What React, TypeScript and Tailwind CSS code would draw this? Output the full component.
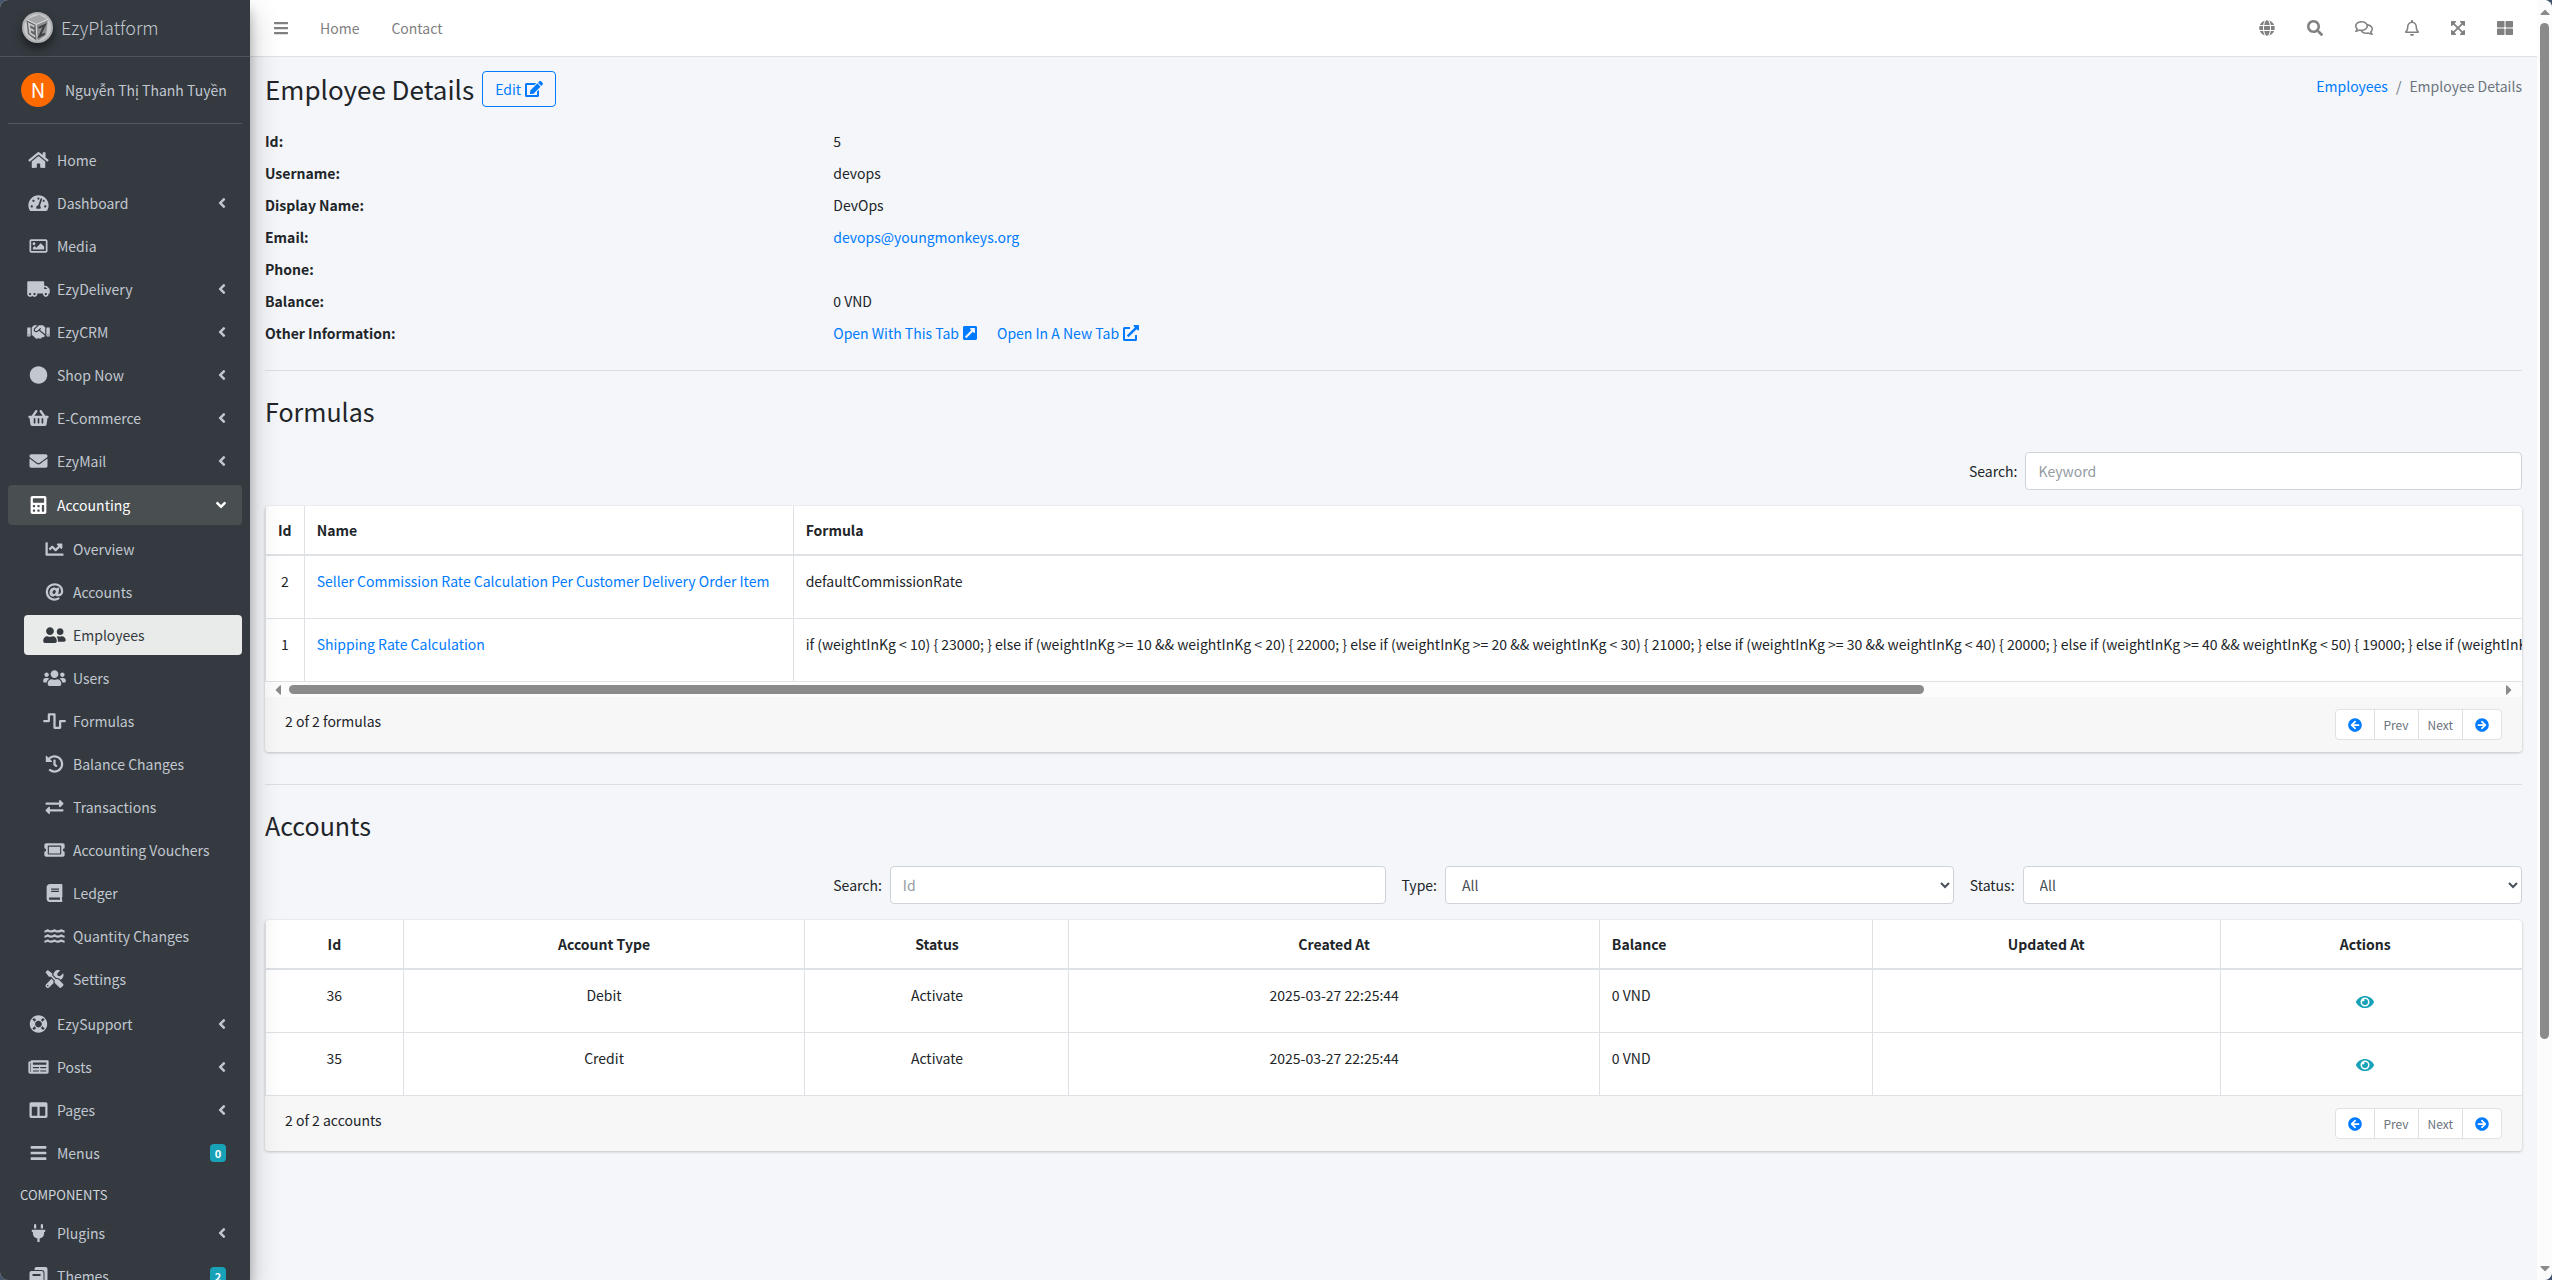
import type { ReactNode } from 'react';
import type { IconType } from 'react-icons';
import {
  FaAngleDown,
  FaAngleLeft,
  FaArrowCircleLeft,
  FaArrowCircleRight,
  FaAt,
  FaBars,
  FaBook,
  FaCalculator,
  FaCaretDown,
  FaCaretLeft,
  FaCaretRight,
  FaCaretUp,
  FaChartLine,
  FaCircle,
  FaColumns,
  FaEdit,
  FaEnvelope,
  FaExchangeAlt,
  FaExpandArrowsAlt,
  FaExternalLinkAlt,
  FaExternalLinkSquareAlt,
  FaEye,
  FaGlobe,
  FaHandshake,
  FaHistory,
  FaHome,
  FaLifeRing,
  FaNewspaper,
  FaPlug,
  FaRegBell,
  FaRegComments,
  FaRegImage,
  FaSearch,
  FaShoppingBasket,
  FaTachometerAlt,
  FaThLarge,
  FaTicketAlt,
  FaTools,
  FaTruckMoving,
  FaUserFriends,
  FaUsers,
  FaWater,
  FaWaveSquare,
} from 'react-icons/fa';

type NavItem = {
  label: string;
  icon: IconType;
  expandable?: boolean;
  badge?: number;
};

const mainItems: NavItem[] = [
  { label: 'Home', icon: FaHome },
  { label: 'Dashboard', icon: FaTachometerAlt, expandable: true },
  { label: 'Media', icon: FaRegImage },
  { label: 'EzyDelivery', icon: FaTruckMoving, expandable: true },
  { label: 'EzyCRM', icon: FaHandshake, expandable: true },
  { label: 'Shop Now', icon: FaCircle, expandable: true },
  { label: 'E-Commerce', icon: FaShoppingBasket, expandable: true },
  { label: 'EzyMail', icon: FaEnvelope, expandable: true },
];

const accountingItems: NavItem[] = [
  { label: 'Overview', icon: FaChartLine },
  { label: 'Accounts', icon: FaAt },
  { label: 'Employees', icon: FaUserFriends },
  { label: 'Users', icon: FaUsers },
  { label: 'Formulas', icon: FaWaveSquare },
  { label: 'Balance Changes', icon: FaHistory },
  { label: 'Transactions', icon: FaExchangeAlt },
  { label: 'Accounting Vouchers', icon: FaTicketAlt },
  { label: 'Ledger', icon: FaBook },
  { label: 'Quantity Changes', icon: FaWater },
  { label: 'Settings', icon: FaTools },
];

const contentItems: NavItem[] = [
  { label: 'EzySupport', icon: FaLifeRing, expandable: true },
  { label: 'Posts', icon: FaNewspaper, expandable: true },
  { label: 'Pages', icon: FaColumns, expandable: true },
  { label: 'Menus', icon: FaBars, badge: 0 },
];

const componentItems: NavItem[] = [
  { label: 'Plugins', icon: FaPlug, expandable: true },
  { label: 'Themes', icon: ThemesIcon, badge: 2 },
];

const toolbar = [
  { label: 'Language', icon: FaGlobe, size: 'h-4 w-4' },
  { label: 'Search', icon: FaSearch, size: 'h-4 w-4' },
  { label: 'Messages', icon: FaRegComments, size: 'h-4 w-[18px]' },
  { label: 'Notifications', icon: FaRegBell, size: 'h-4 w-3.5' },
  { label: 'Fullscreen', icon: FaExpandArrowsAlt, size: 'h-4 w-3.5' },
  { label: 'Control sidebar', icon: FaThLarge, size: 'h-4 w-4' },
];

const formulas = [
  {
    id: 2,
    name: 'Seller Commission Rate Calculation Per Customer Delivery Order Item',
    formula: 'defaultCommissionRate',
  },
  {
    id: 1,
    name: 'Shipping Rate Calculation',
    formula:
      'if (weightInKg < 10) { 23000; } else if (weightInKg >= 10 && weightInKg < 20) { 22000; } else if (weightInKg >= 20 && weightInKg < 30) { 21000; } else if (weightInKg >= 30 && weightInKg < 40) { 20000; } else if (weightInKg >= 40 && weightInKg < 50) { 19000; } else if (weightInKg >= 50) { 18000; }',
  },
];

const accounts = [
  { id: 36, type: 'Debit', status: 'Activate', createdAt: '2025-03-27 22:25:44', balance: '0 VND', updatedAt: '' },
  { id: 35, type: 'Credit', status: 'Activate', createdAt: '2025-03-27 22:25:44', balance: '0 VND', updatedAt: '' },
];

function ThemesIcon({ className }: { className?: string }) {
  return (
    <svg viewBox="0 0 18 18" className={className} fill="currentColor" aria-hidden="true">
      <path d="M5 3V2a2 2 0 0 1 2-2h9a2 2 0 0 1 2 2v10a2 2 0 0 1-2 2h-1V6a3 3 0 0 0-3-3z" />
      <path fillRule="evenodd" d="M2 4h10a2 2 0 0 1 2 2v10a2 2 0 0 1-2 2H2a2 2 0 0 1-2-2V6a2 2 0 0 1 2-2zm1 3v2h8V7z" />
    </svg>
  );
}

function Logo() {
  return (
    <svg viewBox="0 0 90 90" className="size-[31px] drop-shadow-[0_5px_5px_rgba(0,0,0,0.5)]" aria-hidden="true">
      <circle cx="45" cy="45" r="45" fill="#aeb0b1" />
      <circle cx="45" cy="45" r="39" fill="#c8cacb" />
      <path d="M13 22L50 8l25 14-34 14z" fill="#a3a5a6" />
      <path d="M13 22l28 14 3 49-27-21z" fill="#66686a" />
      <path d="M41 36l34-14-5 45-26 18z" fill="#8b8d8f" />
      <path d="M13 22l28 14 34-14M41 36l3 49" stroke="#dadcdd" strokeWidth="3" fill="none" />
      <path d="M36 42l-16-8 4 28 14 9M22 48l13 7" stroke="#c8cacb" strokeWidth="5" fill="none" />
      <path d="M48 46l18-8-16 33 16-8" stroke="#3f4144" strokeWidth="6" fill="none" />
    </svg>
  );
}

function NavLink({ item, nested, state }: { item: NavItem; nested?: boolean; state?: 'open' | 'current' }) {
  const Icon = item.icon;
  let tone = 'text-[#c2c7d0]';
  if (state === 'open') tone = 'bg-[#494e51] text-white';
  if (state === 'current') tone = 'bg-[#e9ebea] text-[#343a40]';

  return (
    <a href="#" className={`flex h-10 items-center rounded pr-4 pl-[17px] ${tone} ${nested ? 'ml-4' : ''}`}>
      <span className="mr-1.5 flex w-[26px] shrink-0 justify-center">
        <Icon className="h-[18px] w-[23px]" />
      </span>
      <span className="grow whitespace-nowrap">{item.label}</span>
      {item.badge !== undefined && (
        <span className="flex h-[18px] w-4 items-center justify-center rounded bg-[#17a2b8] text-[11px] font-bold text-white">
          {item.badge}
        </span>
      )}
      {item.expandable && (state === 'open' ? <FaAngleDown className="h-4 w-2.5" /> : <FaAngleLeft className="h-4 w-2" />)}
    </a>
  );
}

function NavGroup({ items, nested, current }: { items: NavItem[]; nested?: boolean; current?: string }) {
  return (
    <ul className="space-y-[3px]">
      {items.map((item) => (
        <li key={item.label}>
          <NavLink item={item} nested={nested} state={item.label === current ? 'current' : undefined} />
        </li>
      ))}
    </ul>
  );
}

function Sidebar() {
  return (
    <aside className="z-10 flex w-[250px] shrink-0 flex-col overflow-hidden bg-[#343a40] shadow-[0_14px_28px_rgba(0,0,0,0.25),0_10px_10px_rgba(0,0,0,0.22)]">
      <a href="#" className="flex h-[57px] shrink-0 items-center gap-2 border-b border-[#4b545c] pb-0.5 pl-[22px] text-[18px] font-light text-[#c2c7d0]">
        <Logo />
        EzyPlatform
      </a>
      <div className="mx-2 flex h-[67px] shrink-0 items-center gap-2.5 border-b border-[#4f5962] pl-[13px] text-[#c2c7d0]">
        <span className="flex size-[34px] shrink-0 items-center justify-center rounded-full bg-[#ff6a00] text-[20px] text-white">
          N
        </span>
        <a href="#" className="whitespace-nowrap">Nguyễn Thị Thanh Tuyền</a>
      </div>
      <nav className="mt-4 flex flex-col gap-1 px-2">
        <NavGroup items={mainItems} />
        <NavLink item={{ label: 'Accounting', icon: FaCalculator, expandable: true }} state="open" />
        <div className="pb-px">
          <NavGroup items={accountingItems} nested current="Employees" />
        </div>
        <NavGroup items={contentItems} />
        <h2 className="h-8 pt-1.5 pl-3 text-[13px] text-[#d0d4db]">COMPONENTS</h2>
        <NavGroup items={componentItems} />
      </nav>
    </aside>
  );
}

function Topbar() {
  return (
    <header className="flex h-[57px] shrink-0 items-center border-b border-[#dee2e6] bg-white px-6 text-[#808080]">
      <button type="button" aria-label="Toggle sidebar">
        <FaBars className="h-4 w-3.5" />
      </button>
      <nav className="ml-8 flex gap-8">
        <a href="#">Home</a>
        <a href="#">Contact</a>
      </nav>
      <div className="ml-auto flex gap-8">
        {toolbar.map(({ label, icon: Icon, size }) => (
          <button key={label} type="button" aria-label={label}>
            <Icon className={size} />
          </button>
        ))}
      </div>
    </header>
  );
}

function DetailRow({ label, children }: { label: string; children?: ReactNode }) {
  return (
    <div className="grid h-8 grid-cols-4 gap-x-4">
      <dt className="font-bold">{label}:</dt>
      <dd className="col-span-3">{children}</dd>
    </div>
  );
}

function Pagination() {
  return (
    <div className="flex h-[31px] divide-x divide-[#dee2e6] rounded border border-[#dee2e6] bg-white text-[12px] text-[#6c757d]">
      <button type="button" aria-label="First page" className="px-3 text-[#007bff]">
        <FaArrowCircleLeft className="size-3.5" />
      </button>
      <button type="button" className="px-[9px]">Prev</button>
      <button type="button" className="px-[9px]">Next</button>
      <button type="button" aria-label="Last page" className="px-3 text-[#007bff]">
        <FaArrowCircleRight className="size-3.5" />
      </button>
    </div>
  );
}

function TableCard({ summary, children }: { summary: string; children: ReactNode }) {
  return (
    <div className="overflow-hidden rounded bg-white shadow-[0_0_1px_rgba(0,0,0,0.13),0_1px_3px_rgba(0,0,0,0.2)]">
      {children}
      <div className="flex justify-between bg-[#f7f7f7] px-5 py-3">
        <span>{summary}</span>
        <Pagination />
      </div>
    </div>
  );
}

const headCell = 'h-[50px] border-b-2 border-l border-[#dee2e6] px-3 font-bold';
const bodyCell = 'h-[63px] border-b border-l border-[#dee2e6] px-3 pt-[13px] align-top';
const field = 'h-[38px] rounded border border-[#ced4da] bg-white text-[#495057] placeholder:text-[#939ba2]';

function FormulasSection() {
  return (
    <section>
      <h2 className="text-[25px] leading-9">Formulas</h2>
      <div className="mt-[23px] mb-4 flex items-center justify-end gap-2">
        <label htmlFor="formula-keyword">Search:</label>
        <input id="formula-keyword" type="text" placeholder="Keyword" className={`w-[22%] px-3 ${field}`} />
      </div>
      <TableCard summary="2 of 2 formulas">
        <div className="overflow-hidden">
          <table className="w-full border-separate border-spacing-0 text-left whitespace-nowrap">
            <thead>
              <tr>
                <th className={`${headCell} text-center`}>Id</th>
                <th className={`${headCell} min-w-[489px]`}>Name</th>
                <th className={headCell}>Formula</th>
              </tr>
            </thead>
            <tbody>
              {formulas.map((row) => (
                <tr key={row.id}>
                  <td className={`${bodyCell} text-center`}>{row.id}</td>
                  <td className={bodyCell}>
                    <a href="#" className="text-[#007bff]">{row.name}</a>
                  </td>
                  <td className={bodyCell}>{row.formula}</td>
                </tr>
              ))}
            </tbody>
          </table>
        </div>
        <div className="flex h-[15px] items-center bg-[#fcfcfc] px-[5px] text-[#8b8b8b]">
          <FaCaretLeft className="size-4" />
          <div className="mx-[3px] grow">
            <div className="h-[9px] w-[74%] rounded-full bg-[#8b8b8b]" />
          </div>
          <FaCaretRight className="size-4" />
        </div>
      </TableCard>
    </section>
  );
}

function AccountsSection() {
  return (
    <section>
      <h2 className="text-[25px] leading-9">Accounts</h2>
      <div className="mt-[23px] mb-4 ml-[25%] flex items-center gap-4 pl-1">
        <div className="flex flex-1 items-center gap-2">
          <label htmlFor="account-id">Search:</label>
          <input id="account-id" type="text" placeholder="Id" className={`min-w-0 grow px-3 ${field}`} />
        </div>
        <div className="flex flex-1 items-center gap-2">
          <label htmlFor="account-type">Type:</label>
          <select id="account-type" className={`min-w-0 grow px-3 ${field}`}>
            <option>All</option>
          </select>
        </div>
        <div className="flex flex-1 items-center gap-2">
          <label htmlFor="account-status">Status:</label>
          <select id="account-status" className={`min-w-0 grow px-3 ${field}`}>
            <option>All</option>
          </select>
        </div>
      </div>
      <TableCard summary="2 of 2 accounts">
        <table className="w-full table-fixed border-separate border-spacing-0 text-center">
          <thead>
            <tr>
              <th className={`${headCell} w-[6.1%]`}>Id</th>
              <th className={`${headCell} w-[17.8%]`}>Account Type</th>
              <th className={`${headCell} w-[11.7%]`}>Status</th>
              <th className={`${headCell} w-[23.5%]`}>Created At</th>
              <th className={`${headCell} w-[12.1%] text-left`}>Balance</th>
              <th className={`${headCell} w-[15.4%]`}>Updated At</th>
              <th className={`${headCell} pr-6`}>Actions</th>
            </tr>
          </thead>
          <tbody>
            {accounts.map((row) => (
              <tr key={row.id}>
                <td className={bodyCell}>{row.id}</td>
                <td className={bodyCell}>{row.type}</td>
                <td className={bodyCell}>{row.status}</td>
                <td className={bodyCell}>{row.createdAt}</td>
                <td className={`${bodyCell} text-left`}>{row.balance}</td>
                <td className={bodyCell}>{row.updatedAt}</td>
                <td className={`${bodyCell} pr-6`}>
                  <button type="button" aria-label={`View account ${row.id}`} className="mt-[11px] text-[#17a2b8]">
                    <FaEye className="h-4 w-[18px]" />
                  </button>
                </td>
              </tr>
            ))}
          </tbody>
        </table>
      </TableCard>
    </section>
  );
}

export default function App() {
  return (
    <div lang="en" className="bg-[#44546c]">
      <div className="flex h-screen overflow-hidden rounded-lg bg-[#f4f6f9] font-['Noto_Sans_CJK_SC','Noto_Sans',sans-serif] text-[14px] leading-6 text-[#212529]">
        <Sidebar />
        <div className="flex min-w-0 grow flex-col">
          <Topbar />
          <main className="px-[15px]">
            <div className="flex items-start justify-between pt-[14px]">
              <div className="flex items-center gap-2">
                <h1 className="text-[26px] leading-9">Employee Details</h1>
                <button type="button" className="flex h-9 items-center gap-1 rounded border border-[#007bff] px-3 text-[#007bff]">
                  Edit <FaEdit className="h-4 w-[18px]" />
                </button>
              </div>
              <nav className="flex gap-2 pt-[3px] text-[#6c757d]">
                <a href="#" className="text-[#007bff]">Employees</a>
                <span>/</span>
                <span>Employee Details</span>
              </nav>
            </div>

            <dl className="mt-[22px]">
              <DetailRow label="Id">5</DetailRow>
              <DetailRow label="Username">devops</DetailRow>
              <DetailRow label="Display Name">DevOps</DetailRow>
              <DetailRow label="Email">
                <a href="#" className="text-[#007bff]">devops@youngmonkeys.org</a>
              </DetailRow>
              <DetailRow label="Phone" />
              <DetailRow label="Balance">0 VND</DetailRow>
              <DetailRow label="Other Information">
                <span className="flex gap-5 text-[#007bff]">
                  <a href="#" className="flex items-center gap-1">
                    Open With This Tab <FaExternalLinkSquareAlt className="h-4 w-3.5" />
                  </a>
                  <a href="#" className="flex items-center gap-1">
                    Open In A New Tab <FaExternalLinkAlt className="size-4" />
                  </a>
                </span>
              </DetailRow>
            </dl>

            <hr className="mt-[17px] mb-[22px] border-[#dcdfe2]" />
            <FormulasSection />
            <hr className="mt-8 mb-[22px] border-[#dcdfe2]" />
            <AccountsSection />
          </main>
        </div>

        <div className="flex w-[15px] shrink-0 flex-col items-center bg-[#fcfcfc] py-1 text-[#8b8b8b]">
          <FaCaretUp className="size-4 shrink-0" />
          <div className="my-[3px] min-h-0 w-[9px] grow">
            <div className="h-[82.3%] rounded-full bg-[#8b8b8b]" />
          </div>
          <FaCaretDown className="size-4 shrink-0" />
        </div>
      </div>
    </div>
  );
}
